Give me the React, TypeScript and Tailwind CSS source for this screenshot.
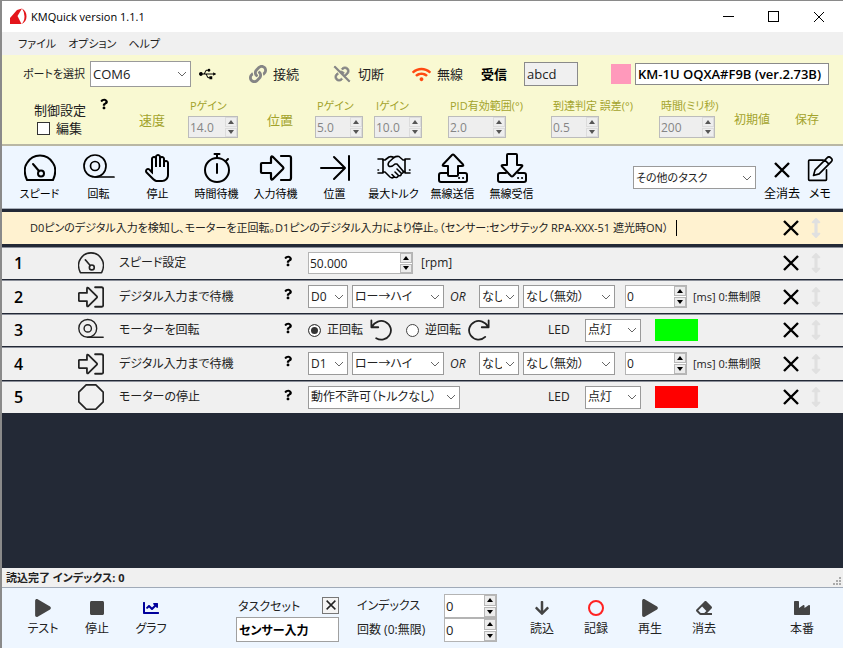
import { useState } from "react";
import type { ReactNode } from "react";
import { FaArrowDown, FaArrowsAltV, FaChartLine, FaEraser, FaIndustry, FaLink, FaPlay, FaQuestion, FaSquare, FaUsb, FaWifi } from "react-icons/fa";
import { LiaHandPaper } from "react-icons/lia";
import { BiUnlink } from "react-icons/bi";

type IconProps = { className?: string };

const Svg = ({ className, width = "2", children }: { className?: string; width?: string; children: ReactNode }) => (
  <svg viewBox="0 0 32 32" className={className} fill="none" stroke="currentColor" strokeWidth={width} strokeLinecap="round" strokeLinejoin="round" aria-hidden="true">
    {children}
  </svg>
);

const MeterIcon = ({ className }: IconProps) => (
  <Svg className={className}>
    <path d="M3 28C0 22 0 15 3 11C9 1 23 1 29 11C32 15 32 22 29 28Z" />
    <circle cx="17" cy="21.5" r="3" />
    <path d="M15 19L9 12" />
  </Svg>
);

const TapeIcon = ({ className }: IconProps) => (
  <Svg className={className} width="1.7">
    <circle cx="12" cy="14" r="11" />
    <circle cx="12" cy="14" r="4.5" />
    <path d="M12 25H31" />
  </Svg>
);

const TimerIcon = ({ className }: IconProps) => (
  <Svg className={className}>
    <circle cx="16" cy="18" r="12" />
    <path d="M16 12V21M16 6V3M13.5 2H18.5M25 9L27 7" />
  </Svg>
);

const InputIcon = ({ className }: IconProps) => (
  <Svg className={className} width="2.2">
    <path d="M1 12Q1 11 2 11H11V6Q11 3.500 13 5L23 15Q24 16 23 17L13 27Q11 28.500 11 26V21H2Q1 21 1 20Z" />
    <path d="M21 4H29Q31 4 31 6V26Q31 28 29 28H21" />
  </Svg>
);

const PositionIcon = ({ className }: IconProps) => (
  <Svg className={className}>
    <path d="M2 16H25M15 5L26 16L15 27M30 4V28" />
  </Svg>
);

const HandshakeIcon = ({ className }: IconProps) => (
  <svg viewBox="0 0 34 32" className={className} fill="none" stroke="currentColor" strokeWidth="1.6" strokeLinecap="round" strokeLinejoin="round" aria-hidden="true">
    <path d="M1 7H6V21H1M33 7H28V21H33" />
    <path d="M1 18H1.500M32.500 18H33" />
    <path d="M6 8H8L12 5Q14 4 17 5.500Q19 4 22 4.500L26 8H28" />
    <path d="M17 5.500L12 10Q10 13 12.500 14.500Q15 15 18 12H20L26 19Q27 20 28 20" />
    <path d="M6 20H8L13 25Q15.500 27 17 24.500Q20 27 21.500 23.500Q24 24.500 24.500 21.500Q27 21 26 19M17 24.500L15 22.500M21.500 23.500L18 20M24.500 21.500L20 17" />
  </svg>
);

const SendIcon = ({ className }: IconProps) => (
  <Svg className={className}>
    <path d="M11 23V14H7Q5 14 6 12.500L15 3Q16 2 17 3L26 12.500Q27 14 25 14H21V23Q21 24 20 24H12Q11 24 11 23Z" />
    <path d="M11 21H4Q2 21 2 23V28Q2 30 4 30H28Q30 30 30 28V23Q30 21 28 21H21M22 26H22.100M26 26H26.100" />
  </Svg>
);

const ReceiveIcon = ({ className }: IconProps) => (
  <Svg className={className}>
    <path d="M11 3V13H7Q5 13 6 14.500L15 24Q16 25 17 24L26 14.500Q27 13 25 13H21V3Q21 2 20 2H12Q11 2 11 3Z" />
    <path d="M10 21H4Q2 21 2 23V28Q2 30 4 30H28Q30 30 30 28V23Q30 21 28 21H22M22 26H22.100M26 26H26.100" />
  </Svg>
);

const MemoIcon = ({ className }: IconProps) => (
  <Svg className={className}>
    <path d="M20 5H3Q2 5 2 6V29Q2 30 3 30H23Q24 30 24 29V17" />
    <path d="M8 24L10 17L25 2Q27 0 29 2L30 3Q32 5 30 7L15 22ZM22 5L27 10" />
  </Svg>
);

const CrossIcon = ({ className }: IconProps) => (
  <svg viewBox="0 0 16 16" className={className} fill="none" stroke="currentColor" strokeWidth="2.4" aria-hidden="true">
    <path d="M1 1L15 15M15 1L1 15" />
  </svg>
);

const OctagonIcon = ({ className }: IconProps) => (
  <Svg className={className}>
    <path d="M10 1H22L31 10V22L22 31H10L1 22V10Z" />
  </Svg>
);

const CcwIcon = ({ className }: IconProps) => (
  <Svg className={className} width="2.6">
    <path d="M2 2V12H12M3 11C7 4 15 1 22 4C30 8 33 17 28 24C24 30 16 32 9 28" />
  </Svg>
);

const CwIcon = ({ className }: IconProps) => (
  <Svg className={className} width="2.6">
    <path d="M30 2V12H20M29 11C25 4 17 1 10 4C2 8 -1 17 4 24C9 31 19 32 25 26" />
  </Svg>
);

const Logo = ({ className }: IconProps) => (
  <svg viewBox="0 0 17 17" className={className} fill="#e4151b" aria-hidden="true">
    <path d="M0 16V10L7 2L12 0.500L7.500 8L11.500 16Z" />
    <path d="M12 0.500Q16.500 3 16.500 8.500Q16.500 14 11.500 16Q14.500 13 14.500 8.500Q14.500 4 12 0.500Z" />
  </svg>
);

type DropProps = { label: string; options: string[]; className: string };

const Drop = ({ label, options, className }: DropProps) => (
  <span className={"relative inline-flex shrink-0 " + className}>
    <select aria-label={label} className="h-full w-full appearance-none border border-[#9a9a9a] bg-white pl-0.5 pr-4 outline-none">
      {options.map((o) => (
        <option key={o}>{o}</option>
      ))}
    </select>
    <svg viewBox="0 0 10 6" className="pointer-events-none absolute right-1 top-1/2 h-1.5 w-2.5 -translate-y-1/2" fill="none" stroke="#666" aria-hidden="true">
      <path d="M1 1L5 5L9 1" />
    </svg>
  </span>
);

type SpinProps = { label: string; initial: string; className: string; disabled?: boolean };

const Spin = ({ label, initial, className, disabled }: SpinProps) => {
  const [value, setValue] = useState(initial);
  const digits = (initial.split(".")[1] || "").length;
  const step = (n: number) => setValue((Number(value) + n).toFixed(digits));
  const tone = disabled ? "border-[#bcbcbc] bg-[#eeeeee] text-[#858585]" : "border-[#b4b4b4] bg-white";
  const btn = disabled ? "border-[#dcdcdc]" : "border-[#b8b8b8] bg-[#ececec]";

  return (
    <span className={"flex shrink-0 border " + tone + " " + className}>
      <input aria-label={label} value={value} disabled={disabled} onChange={(e) => setValue(e.target.value)} className="h-full w-0 min-w-0 flex-1 pl-px outline-none" />
      <span className="flex w-3 shrink-0 flex-col gap-px">
        <button type="button" aria-label="増やす" disabled={disabled} onClick={() => step(1)} className={"flex flex-1 items-center justify-center border " + btn}>
          <svg viewBox="0 0 6 4" className="h-1 w-1.5" fill={disabled ? "#555" : "#000"}>
            <path d="M0 4L3 0L6 4Z" />
          </svg>
        </button>
        <button type="button" aria-label="減らす" disabled={disabled} onClick={() => step(-1)} className={"flex flex-1 items-center justify-center border " + btn}>
          <svg viewBox="0 0 6 4" className="h-1 w-1.5" fill={disabled ? "#555" : "#000"}>
            <path d="M0 0L3 4L6 0Z" />
          </svg>
        </button>
      </span>
    </span>
  );
};

const Gain = ({ label, value, className, width }: { label: string; value: string; className: string; width: string }) => (
  <div className={"flex shrink-0 flex-col whitespace-nowrap " + className}>
    <span className="pl-0.5 text-[11px] leading-5 text-[#a3a32c]">{label}</span>
    <Spin label={label} initial={value} disabled className={"h-[22px] text-xs " + width} />
  </div>
);

const tools = [
  { label: "スピード", icon: <MeterIcon className="size-8" /> },
  { label: "回転", icon: <TapeIcon className="size-8" /> },
  { label: "停止", icon: <LiaHandPaper className="size-8" /> },
  { label: "時間待機", icon: <TimerIcon className="size-8" /> },
  { label: "入力待機", icon: <InputIcon className="h-8 w-[34px]" /> },
  { label: "位置", icon: <PositionIcon className="size-8" /> },
  { label: "最大トルク", icon: <HandshakeIcon className="h-8 w-[34px]" /> },
  { label: "無線送信", icon: <SendIcon className="size-8" /> },
  { label: "無線受信", icon: <ReceiveIcon className="size-8" /> },
];

const RowActions = () => (
  <div className="ml-auto flex shrink-0 items-center gap-[11px] pr-[21px] text-black">
    <button type="button" aria-label="削除">
      <CrossIcon className="size-4" />
    </button>
    <button type="button" aria-label="移動" className="flex w-3 justify-center text-[#e0e0e0]">
      <FaArrowsAltV className="h-5 w-3" />
    </button>
  </div>
);

const Digital = ({ pin }: { pin: string }) => (
  <>
    <Drop label="ピン" options={[pin]} className="h-[23px] w-10" />
    <Drop label="条件" options={["ロー→ハイ", "ハイ→ロー"]} className="ml-1 h-[23px] w-[92px]" />
    <i className="w-[35px] pl-1.5">OR</i>
    <Drop label="ピン2" options={["なし"]} className="h-[23px] w-10" />
    <Drop label="条件2" options={["なし（無効）"]} className="ml-1 h-[23px] w-[92px]" />
    <Spin label="タイムアウト" initial="0" className="ml-2.5 h-[23px] w-[62px]" />
    <span className="ml-1.5 text-[11px]">[ms] 0:無制限</span>
  </>
);

const Led = ({ color }: { color: string }) => (
  <>
    <span className="w-[37px] shrink-0">LED</span>
    <Drop label="LED" options={["点灯", "消灯"]} className="h-[23px] w-14" />
    <span className={"ml-3.5 h-[22px] w-[43px] shrink-0 " + color} />
  </>
);

const Rotation = () => {
  const [dir, setDir] = useState("cw");
  const dot = "size-[13px] shrink-0 appearance-none rounded-full border border-[#444] bg-white checked:border-[#444] checked:bg-[#333] checked:shadow-[inset_0_0_0_2px_#fff]";
  return (
    <div className="flex w-60 shrink-0 items-center">
      <label className="flex w-[62px] items-center gap-1.5">
        <input type="radio" name="dir" checked={dir === "cw"} onChange={() => setDir("cw")} className={dot} />
        正回転
      </label>
      <CcwIcon className="size-[22px]" />
      <label className="ml-3.5 flex w-[62px] items-center gap-1.5">
        <input type="radio" name="dir" checked={dir === "ccw"} onChange={() => setDir("ccw")} className={dot} />
        逆回転
      </label>
      <CwIcon className="size-[22px]" />
    </div>
  );
};

const tasks = [
  {
    name: "スピード設定",
    icon: <MeterIcon className="size-[26px]" />,
    body: (
      <>
        <Spin label="スピード" initial="50.000" className="h-[22px] w-[105px]" />
        <span className="ml-2">[rpm]</span>
      </>
    ),
  },
  { name: "デジタル入力まで待機", icon: <InputIcon className="size-[26px]" />, body: <Digital pin="D0" /> },
  {
    name: "モーターを回転",
    icon: <TapeIcon className="size-[26px]" />,
    body: (
      <>
        <Rotation />
        <Led color="bg-[#00ff00]" />
      </>
    ),
  },
  { name: "デジタル入力まで待機", icon: <InputIcon className="size-[26px]" />, body: <Digital pin="D1" /> },
  {
    name: "モーターの停止",
    icon: <OctagonIcon className="size-[26px]" />,
    body: (
      <>
        <div className="flex w-60 shrink-0">
          <Drop label="停止方法" options={["動作不許可（トルクなし）"]} className="h-[23px] w-[152px]" />
        </div>
        <Led color="bg-[#ff0000]" />
      </>
    ),
  },
];

const BottomButton = ({ label, children }: { label: string; children: ReactNode }) => (
  <button type="button" className="flex w-[54px] shrink-0 flex-col items-center gap-1 whitespace-nowrap text-xs text-[#444]">
    <span className="flex h-[18px] items-center">{children}</span>
    <span className="text-[#222]">{label}</span>
  </button>
);

const App: React.FC = () => {
  const [edit, setEdit] = useState(false);
  const [received, setReceived] = useState("abcd");
  const [device, setDevice] = useState("KM-1U OQXA#F9B (ver.2.73B)");
  const [taskset, setTaskset] = useState("センサー入力");
  const [memo, setMemo] = useState("D0ピンのデジタル入力を検知し、モーターを正回転。D1ピンのデジタル入力により停止。（センサー:センサテック RPA-XXX-51 遮光時ON）");

  return (
    <div lang="ja" className="flex min-h-screen flex-col border-l-2 border-t border-[#8a8a8a] bg-[#232936] font-['Open_Sans','Noto_Sans_CJK_JP',sans-serif] text-xs leading-4 text-[#222] [font-feature-settings:'palt']">
      <header className="flex h-[31px] items-center bg-white pl-2 text-black">
        <Logo className="size-[17px]" />
        <h1 className="ml-1 text-[11px]">KMQuick version 1.1.1</h1>
        <div className="ml-auto flex items-center gap-[34px] pr-[18px]">
          <button type="button" aria-label="最小化" className="h-px w-[11px] bg-black" />
          <button type="button" aria-label="最大化" className="size-[11px] border border-black" />
          <button type="button" aria-label="閉じる">
            <svg viewBox="0 0 12 12" className="size-3" stroke="#000" fill="none">
              <path d="M1 1L11 11M11 1L1 11" />
            </svg>
          </button>
        </div>
      </header>

      <nav className="flex h-[23px] items-center gap-3 bg-[#f0f0f0] pl-4 text-[11px]">
        <button type="button">ファイル</button>
        <button type="button">オプション</button>
        <button type="button">ヘルプ</button>
      </nav>

      <section className="h-[91px] border-b-2 border-[#b9b7a4] bg-[#f9f9d2]">
        <div className="flex h-[38px] items-center whitespace-nowrap">
          <span className="w-[88px] shrink-0 pl-[21px] text-[11px]">ポートを選択</span>
          <Drop label="ポート" options={["COM6"]} className="h-[26px] w-[101px] text-[13px]" />
          <FaUsb className="ml-2 h-4 w-[17px] text-black" />
          <button type="button" className="ml-[33px] flex w-[83px] items-center gap-1.5 text-[13px]">
            <FaLink className="size-[18px] text-[#858585]" />
            接続
          </button>
          <button type="button" className="flex w-20 items-center gap-1.5 text-[13px]">
            <BiUnlink className="size-5 text-[#858585]" stroke="currentColor" strokeWidth="1" />
            切断
          </button>
          <button type="button" className="flex w-[69px] items-center gap-1.5 text-[13px]">
            <FaWifi className="size-[19px] text-[#ff4a12]" />
            無線
          </button>
          <label htmlFor="received" className="w-[43px] shrink-0 text-[13px] font-bold text-black">
            受信
          </label>
          <input id="received" value={received} onChange={(e) => setReceived(e.target.value)} className="h-6 w-[54px] border border-[#8a8a8a] bg-[#f0f0f0] px-0.5 text-[13px] outline-none" />
          <span className="ml-auto size-5 shrink-0 bg-[#ff99bb]" />
          <input aria-label="デバイス" value={device} onChange={(e) => setDevice(e.target.value)} className="ml-1 mr-3.5 h-[22px] w-[194px] border border-[#8a8a8a] bg-white px-0.5 text-[13px] font-semibold text-black outline-none" />
        </div>
        <div className="flex items-start pt-[3px]">
          <div className="w-[137px] shrink-0 pl-8 pt-1.5">
            <div className="flex items-start gap-3.5 text-[13px]">
              制御設定
              <button type="button" aria-label="ヘルプ" className="-mt-1">
                <FaQuestion className="h-3 w-2 text-black" />
              </button>
            </div>
            <label className="flex items-center gap-1.5 pl-[3px] pt-0.5 text-[13px]">
              <input type="checkbox" checked={edit} onChange={(e) => setEdit(e.target.checked)} className="size-[13px] appearance-none border border-[#333] bg-white checked:bg-[#333]" />
              編集
            </label>
          </div>
          <span className="w-[49px] shrink-0 pt-4 text-[13px] text-[#a3a32c]">速度</span>
          <Gain label="Pゲイン" value="14.0" className="w-[79px]" width="w-[50px]" />
          <span className="w-12 shrink-0 pt-4 text-[13px] text-[#a3a32c]">位置</span>
          <Gain label="Pゲイン" value="5.0" className="w-[59px]" width="w-12" />
          <Gain label="Iゲイン" value="10.0" className="w-[74px]" width="w-12" />
          <Gain label="PID有効範囲(°)" value="2.0" className="w-[103px]" width="w-[58px]" />
          <Gain label="到達判定 誤差(°)" value="0.5" className="w-[108px]" width="w-12" />
          <Gain label="時間(ミリ秒)" value="200" className="w-[75px]" width="w-14" />
          <button type="button" disabled className="mt-4 text-[#a3a32c]">
            初期値
          </button>
          <button type="button" disabled className="ml-auto mr-6 mt-4 text-[#a3a32c]">
            保存
          </button>
        </div>
      </section>

      <section className="flex h-[63px] border-b border-[#a9b0ba] bg-[#eef6ff] pl-2">
        {tools.map((t) => (
          <button type="button" key={t.label} className="flex w-[59px] shrink-0 flex-col items-center gap-0.5 whitespace-nowrap pt-1.5 text-[11px] text-black">
            {t.icon}
            {t.label}
          </button>
        ))}
        <div className="ml-auto flex shrink-0 items-start">
          <Drop label="その他のタスク" options={["その他のタスク"]} className="mt-5 h-[23px] w-[123px] text-[11px]" />
          <button type="button" className="ml-1 flex w-11 flex-col items-center gap-2 pt-4 text-black">
            <CrossIcon className="size-4" />
            全消去
          </button>
          <button type="button" className="mr-[7px] flex w-8 flex-col items-center gap-1 pt-2.5 text-black">
            <MemoIcon className="size-[26px]" />
            メモ
          </button>
        </div>
      </section>

      <main>
        <div className="flex h-[38px] items-center border-y-[3px] border-[#232936] bg-[#fff2d0]">
          <input aria-label="メモ" value={memo} onChange={(e) => setMemo(e.target.value)} className="field-sizing-content pl-7 text-[11px] outline-none" />
          <span className="ml-2 h-4 w-px bg-black" />
          <RowActions />
        </div>
        <ol>
          {tasks.map((t, i) => (
            <li key={i} className="flex h-[33px] items-center whitespace-nowrap border-b border-[#232936] bg-[#f0f0f0] shadow-[inset_0_1px_#8a8e98] even:h-[34px]">
              <b className="w-[76px] shrink-0 pl-3 text-base font-semibold text-black">{i + 1}</b>
              {t.icon}
              <span className="ml-[15px] w-[165px] shrink-0">{t.name}</span>
              <button type="button" aria-label="ヘルプ" className="mt-2 w-6 shrink-0 self-start">
                <FaQuestion className="h-3 w-2 text-black" />
              </button>
              {t.body}
              <RowActions />
            </li>
          ))}
        </ol>
      </main>

      <footer className="mt-auto">
        <div className="flex h-[19px] items-center justify-between bg-[#f0f0f0] pl-1 text-[11px] font-bold">
          読込完了 インデックス: 0
          <svg viewBox="0 0 12 12" className="size-3 self-end" fill="#aaa" aria-hidden="true">
            <path d="M8 2h2v2H8zM8 5h2v2H8zM8 8h2v2H8zM5 5h2v2H5zM5 8h2v2H5zM2 8h2v2H2z" />
          </svg>
        </div>
        <div className="flex h-[61px] items-start border-t border-[#a0aab8] bg-[#eef6ff] pt-1.5">
          <div className="flex w-[234px] shrink-0 pl-3.5 pt-[5px]">
            <BottomButton label="テスト">
              <FaPlay className="h-[18px] w-4" />
            </BottomButton>
            <BottomButton label="停止">
              <FaSquare className="size-4" />
            </BottomButton>
            <BottomButton label="グラフ">
              <FaChartLine className="size-4 text-[#00009c]" />
            </BottomButton>
          </div>
          <div className="w-[103px] shrink-0 pt-[3px]">
            <div className="flex h-5 items-center justify-between pl-0.5">
              <label htmlFor="taskset">タスクセット</label>
              <button type="button" aria-label="クリア" className="mb-1 flex size-[17px] items-center justify-center border border-[#777] bg-[#f4f4f4]">
                <CrossIcon className="size-2.5" />
              </button>
            </div>
            <input id="taskset" value={taskset} onChange={(e) => setTaskset(e.target.value)} className="h-[25px] w-full border border-[#a0a0a0] bg-white px-0.5 font-bold text-black outline-none" />
          </div>
          <div className="ml-[18px] shrink-0">
            <div className="flex items-center">
              <span className="w-[87px]">インデックス</span>
              <Spin label="インデックス" initial="0" className="h-6 w-[53px] text-[13px]" />
            </div>
            <div className="flex items-center">
              <span className="w-[87px]">回数 (0:無限)</span>
              <Spin label="回数" initial="0" className="h-6 w-[53px] text-[13px]" />
            </div>
          </div>
          <div className="ml-[18px] flex shrink-0 pt-[5px]">
            <BottomButton label="読込">
              <FaArrowDown className="size-4" />
            </BottomButton>
            <BottomButton label="記録">
              <span className="size-4 rounded-full border-2 border-[#f22]" />
            </BottomButton>
            <BottomButton label="再生">
              <FaPlay className="h-[18px] w-4" />
            </BottomButton>
            <BottomButton label="消去">
              <FaEraser className="size-4" />
            </BottomButton>
          </div>
          <div className="ml-auto mr-3.5 pt-[5px]">
            <BottomButton label="本番">
              <FaIndustry className="size-4" />
            </BottomButton>
          </div>
        </div>
      </footer>
    </div>
  );
};

export default App;
